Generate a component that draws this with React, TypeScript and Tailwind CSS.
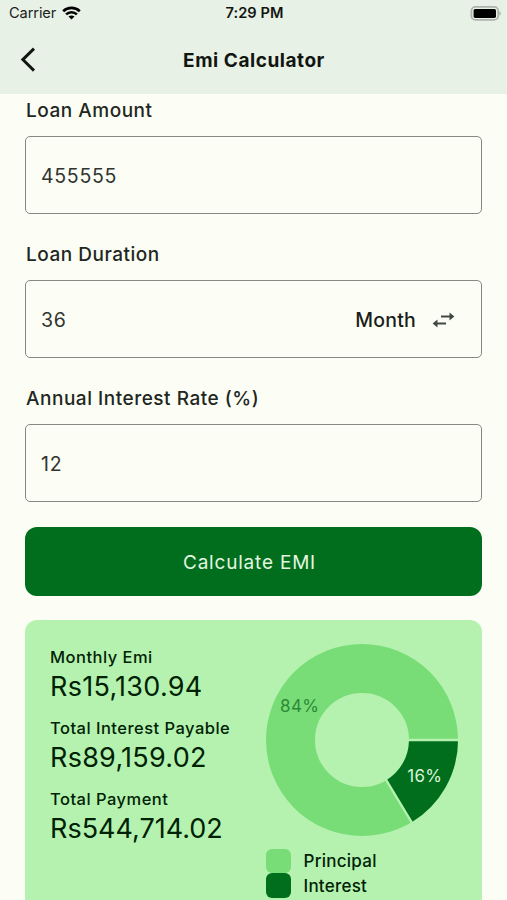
import type { ReactNode } from "react";

const results = [
  { label: "Monthly Emi", value: "Rs15,130.94", tracking: "tracking-[0.27px]" },
  { label: "Total Interest Payable", value: "Rs89,159.02", tracking: "tracking-[0.25px]" },
  { label: "Total Payment", value: "Rs544,714.02", tracking: "tracking-[0px]" },
];

function StatusBar() {
  return (
    <div className="grid h-[27px] grid-cols-3 items-center pl-[8px] pr-[6px] text-[14.6px] text-[#1b211b]">
      <div className="flex items-center gap-1.5 pl-px pt-px">
        <span className="tracking-[-0.1px]">Carrier</span>
        <svg className="-mt-0.5" width="19" height="14" viewBox="0 0 19 14" fill="none" stroke="#000" strokeWidth="2.6">
          <path d="M1.2 5.2C5.8.7 13.2.7 17.8 5.2" />
          <path d="M4.1 8.4c3-2.9 7.8-2.9 10.8 0" />
          <path d="M9.5 13.6 6.5 10.6c1.7-1.5 4.3-1.5 6 0Z" fill="#000" stroke="none" />
        </svg>
      </div>
      <span className="pt-px text-center font-semibold tracking-[0.05px] text-[#111511]">7:29 PM</span>
      <svg className="justify-self-end" width="31" height="15" viewBox="0 0 31 15">
        <rect x="1.4" y="0.9" width="26.8" height="13" rx="4" fill="none" stroke="#adb4ac" strokeWidth="1.8" />
        <rect x="3.6" y="2.9" width="22.4" height="9" rx="1.6" fill="#000" />
        <path d="M29.4 5.2c1.8.6 1.8 3.8 0 4.4Z" fill="#a5aca4" />
      </svg>
    </div>
  );
}

function Field({ label, value, children }: { label: string; value: string; children?: ReactNode }) {
  return (
    <div className="mb-[26px]">
      <div className="pl-px pt-0.5 text-[19px] font-medium leading-[26px] tracking-[0.52px] text-[#222621]">{label}</div>
      <div className="mt-3 flex h-[78px] items-center justify-between rounded-[5px] border border-[#858883] pl-[15px] pr-[26px] pt-1 text-[19.5px] tracking-[0.7px] text-[#30342f]">
        <span>{value}</span>
        {children}
      </div>
    </div>
  );
}

function Donut() {
  return (
    <svg width="194" height="194" viewBox="-97 -97 194 194" className="block">
      <circle r="71.5" fill="none" stroke="#78dd77" strokeWidth="49" />
      <path d="M47 0H96A96 96 0 0 1 49.6 82.2L24.3 40.2A47 47 0 0 0 47 0Z" fill="#006e1c" />
      <path d="M46 0H97M23.8 39.4 50.1 83" stroke="#b5f2af" strokeWidth="2.4" />
      <text x="-62.3" y="-28.5" textAnchor="middle" fontSize="17" letterSpacing="0.4" fill="#2b8a35">84%</text>
      <text x="62.8" y="41.8" textAnchor="middle" fontSize="17" letterSpacing="0.3" fill="#d9f5d6">16%</text>
    </svg>
  );
}

export default function App() {
  return (
    <div className="h-[900px] w-[507px] overflow-hidden bg-[#fcfef5] font-['Inter',sans-serif]">
      <header className="h-[94px] bg-[#e8f1e6]">
        <StatusBar />
        <div className="grid h-[66px] grid-cols-[60px_1fr_60px] items-center">
          <svg className="ml-5" width="16" height="26" viewBox="0 0 16 26" fill="none" stroke="#111611" strokeWidth="2.9">
            <path d="M14 1.6 2.8 12.6 14 23.6" />
          </svg>
          <h1 className="pl-px pt-0.5 text-center text-[19px] font-bold tracking-[0.55px] text-[#101510]">Emi Calculator</h1>
        </div>
      </header>

      <main className="px-[25px] pt-0.5">
        <Field label="Loan Amount" value="455555" />
        <Field label="Loan Duration" value="36">
          <div className="flex items-center gap-4 text-[#1b1f1b]">
            <span className="font-medium tracking-[0.2px]">Month</span>
            <svg className="-mt-0.5" width="23" height="18" viewBox="0 0 23 18" fill="#424842">
              <path d="M9 4.5h8.5v-3L22.4 5.5l-4.9 4v-3H9ZM14 11.5H5.5v-3L.6 12.5l4.9 4v-3H14Z" />
            </svg>
          </div>
        </Field>
        <Field label="Annual Interest Rate (%)" value="12" />

        <button className="-mt-px block h-[69px] w-[457px] rounded-xl bg-[#006e1c] pr-2 pt-[3px] text-[19px] tracking-[0.8px] text-[#e4f6e0]">
          Calculate EMI
        </button>

        <section className="mt-6 flex h-[310px] w-[457px] rounded-xl bg-[#b5f2af] pl-[25px] pt-[23px] text-[#002204]">
          <div className="w-[215px] pt-0.5">
            {results.map((item) => (
              <div key={item.label} className="h-[71px]">
                <div className="whitespace-nowrap text-[16.5px] font-medium leading-6 tracking-[0.48px]">{item.label}</div>
                <div className={`text-[27px] leading-9 ${item.tracking}`}>{item.value}</div>
              </div>
            ))}
          </div>
          <div>
            <Donut />
            <div className="ml-px mt-[11.5px] text-[17px] font-medium leading-6 tracking-[0.25px]">
              <div className="flex h-[24.5px] items-center gap-[13px]">
                <span className="size-[24.5px] rounded-[6px] bg-[#78dd77]" />
                <span className="pt-px">Principal</span>
              </div>
              <div className="flex h-[24.5px] items-center gap-[13px]">
                <span className="size-[24.5px] rounded-[6px] bg-[#006e1c]" />
                <span className="pt-px">Interest</span>
              </div>
            </div>
          </div>
        </section>
      </main>
    </div>
  );
}
